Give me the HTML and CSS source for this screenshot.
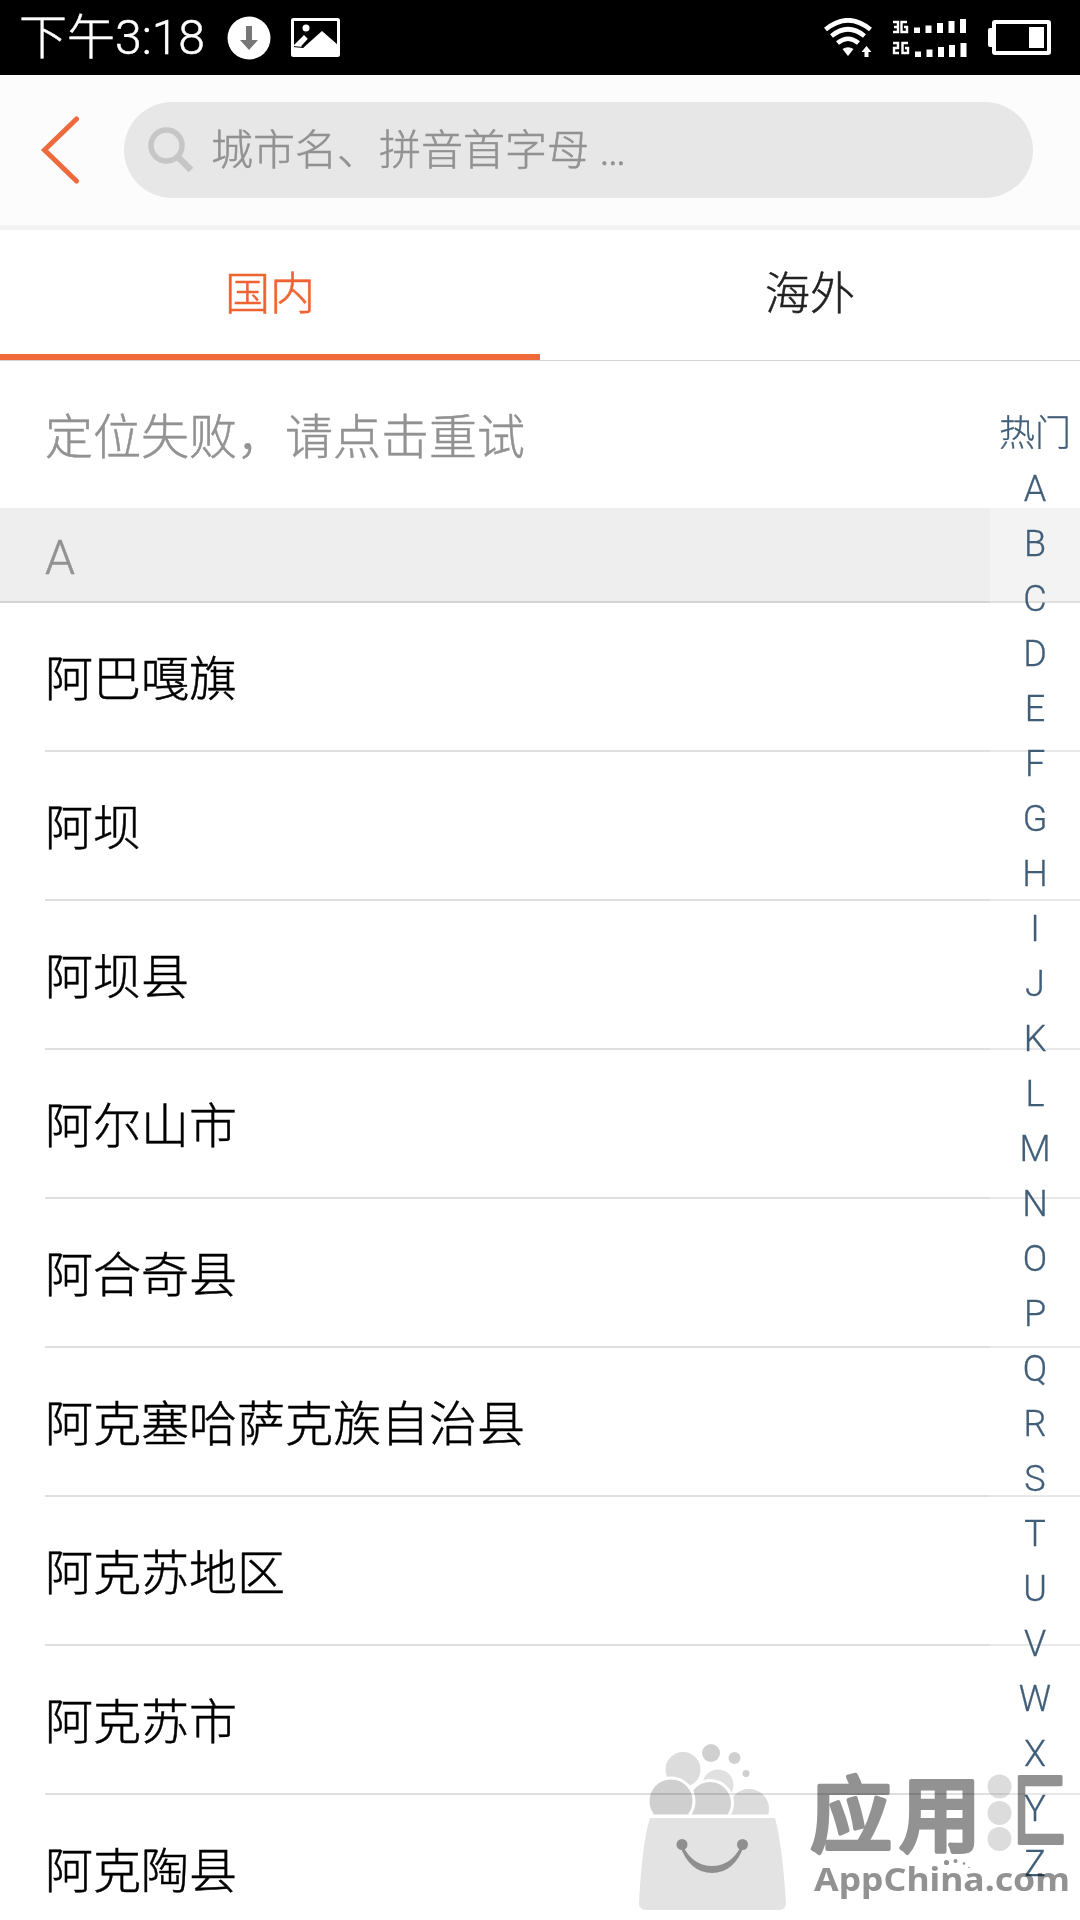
FILE: index.html
```html
<!DOCTYPE html>
<html lang="zh-CN">
<head>
  <meta charset="UTF-8" />
  <meta name="viewport" content="width=device-width, initial-scale=1.0" />
  <title>选择城市</title>
  <link rel="stylesheet" href="styles.css">
</head>
<body>
  <div class="status-bar">
    <span class="time">下午3:18</span>
    <svg class="download-icon" width="44" height="44" viewBox="0 0 44 44">
      <circle cx="22" cy="22" r="21.5" fill="#fff"/>
      <path d="M19 10h6v14h6L22 34l-9-10h6z" fill="#777"/>
    </svg>
    <svg class="photo-icon" width="49" height="39" viewBox="0 0 49 39">
      <rect x="1.5" y="1.5" width="46" height="36" rx="1" fill="none" stroke="#fff" stroke-width="3"/>
      <circle cx="15" cy="10" r="3.5" fill="#fff"/>
      <path d="M2 28l11-11 5 5-6 7zM12 30L31 13l16 14v10H2v-8z" fill="#fff"/>
      <path d="M11 29l9-10" stroke="#000" stroke-width="2.5"/>
    </svg>
    <div class="status-right">
      <svg width="48" height="39" viewBox="0 0 48 39">
        <g fill="none" stroke="#fff" stroke-width="4.6">
          <path d="M1.5 11.5Q24-7 46.5 11.5"/>
          <path d="M7.5 18Q24 4.5 40.5 18"/>
          <path d="M13.5 25Q24 16.5 34.5 25"/>
        </g>
        <path d="M18.500 31Q24 27.500 29.500 31L24 38z" fill="#fff"/>
        <path d="M42.500 28l5 6h-3v5h-4v-5h-3z" fill="#fff"/>
      </svg>
      <svg class="signal" width="76" height="40" viewBox="0 0 76 40">
        <g fill="none" stroke="#fff" stroke-width="2.4">
          <path d="M1 4h5v10H1M2 9h4M15 4H9.500v10H15V9h-3"/>
          <path d="M1 25h5v5H2v5h5M16 25h-5.500v10H16v-5h-3"/>
        </g>
        <path fill="#fff" d="M22 9.500h6V15h-6zM33.500 7.500h6V15h-6zM45 5h6v10h-6zM56.500 3h6v12h-6zM68 1h6v14h-6zM23 33.500h6V39h-6zM34.500 31.500h6V39h-6zM46 29h6v10h-6zM57 27h6v12h-6zM68.500 25h6v14h-6z"/>
      </svg>
      <svg width="64" height="36" viewBox="0 0 64 36">
        <rect x="6" y="2" width="55" height="31" rx="1" fill="none" stroke="#fff" stroke-width="4"/>
        <path d="M0 10q0-2 2-2h3v19H2q-2 0-2-2zM41 7h15v21H41z" fill="#fff"/>
      </svg>
    </div>
  </div>

  <div class="header">
    <svg class="back" width="40" height="68" viewBox="0 0 40 68">
      <path d="M36.500 3L4.500 34l32 31" fill="none" stroke="#ec6a3c" stroke-width="5" stroke-linecap="round"/>
    </svg>
    <div class="search">
      <svg width="46" height="46" viewBox="0 0 46 46">
        <circle cx="18.500" cy="18.500" r="15.500" fill="none" stroke="#c6c6c6" stroke-width="5.500"/>
        <path d="M29 29l14 14" stroke="#c6c6c6" stroke-width="6.500"/>
      </svg>
      <span>城市名、拼音首字母 …</span>
    </div>
  </div>

  <div class="tabs">
    <div class="tab active">国内</div>
    <div class="tab">海外</div>
  </div>

  <div class="location">定位失败，请点击重试</div>
  <div class="letter">A</div>
  <ul class="cities">
    <li>阿巴嘎旗</li>
    <li>阿坝</li>
    <li>阿坝县</li>
    <li>阿尔山市</li>
    <li>阿合奇县</li>
    <li>阿克塞哈萨克族自治县</li>
    <li>阿克苏地区</li>
    <li>阿克苏市</li>
    <li>阿克陶县</li>
  </ul>

  <div class="index-bar">
    <span>热门</span>
    <span>A</span><span>B</span><span>C</span><span>D</span><span>E</span><span>F</span>
    <span>G</span><span>H</span><span>I</span><span>J</span><span>K</span><span>L</span>
    <span>M</span><span>N</span><span>O</span><span>P</span><span>Q</span><span>R</span>
    <span>S</span><span>T</span><span>U</span><span>V</span><span>W</span><span>X</span>
    <span>Y</span><span>Z</span>
  </div>

  <svg class="watermark" width="460" height="200" viewBox="0 0 460 200">
    <clipPath id="bagTop"><rect x="0" y="0" width="200" height="94.500"/></clipPath>
    <!-- bubbles -->
    <g clip-path="url(#bagTop)" stroke="#fff" stroke-width="3">
      <circle cx="98" cy="65" r="17" fill="#e0e0e0"/>
      <circle cx="63" cy="49.500" r="19" fill="#dcdcdc"/>
      <circle cx="129" cy="89" r="21.500" fill="#dcdcdc"/>
      <circle cx="90" cy="83" r="22.500" fill="#d2d2d2"/>
      <circle cx="51" cy="81" r="23" fill="#cfcfcf"/>
    </g>
    <g fill="#d0d0d0">
      <circle cx="91" cy="33" r="9"/>
      <circle cx="114.500" cy="38" r="6"/>
      <circle cx="126" cy="53.500" r="3.500"/>
    </g>
    <!-- bag -->
    <path d="M30 98h125q7 25 11 85 0 7-7 7H26q-7 0-7-7 3-60 11-85z" fill="#e3e3e3"/>
    <g fill="#8f8f8f">
      <circle cx="62" cy="124.500" r="5.500"/>
      <circle cx="122.500" cy="124.500" r="5.500"/>
      <path d="M60 126q10 27 32 27t32-27l-3 0q-10 20-29 20t-29-20z"/>
    </g>
    <g class="brand">
      <text x="190" y="125" font-size="82" letter-spacing="7">应用</text>
      <text transform="translate(393 121) scale(.66 1)" font-size="82">匚</text>
      <text class="domain" x="194" y="171" font-size="32" textLength="256" lengthAdjust="spacingAndGlyphs">AppChina.com</text>
    </g>
    <g fill="#dcdcdc">
      <circle cx="379.500" cy="66.500" r="12"/>
      <circle cx="379.500" cy="93" r="12"/>
      <circle cx="379.500" cy="119" r="12"/>
    </g>
    <g fill="#929292">
      <circle cx="326.500" cy="142.500" r="2.600"/>
      <circle cx="335.500" cy="141" r="2"/>
      <circle cx="344" cy="143.500" r="1.300"/>
      <circle cx="349" cy="147.500" r=".8"/>
    </g>
  </svg>
</body>
</html>
```
FILE: styles.css
```css
* {
  box-sizing: border-box;
}

body {
  position: relative;
  width: 1080px;
  height: 1920px;
  margin: 0;
  overflow: hidden;
  background: #fff;
  font-family: Roboto, "Noto Sans CJK SC", sans-serif;
  font-weight: 300;
  color: #000;
  -webkit-text-stroke: 0.5px currentColor;
}

.status-bar {
  display: flex;
  align-items: center;
  height: 75px;
  padding: 0 28px 0 19px;
  background: #000;
  color: #fff;
}

.time {
  font-size: 48px;
  line-height: 74px;
}

.download-icon {
  margin-left: 22px;
}

.photo-icon {
  margin-left: 20px;
}

.status-right {
  display: flex;
  align-items: center;
  gap: 20px;
  margin-left: auto;
}

.header {
  display: flex;
  align-items: center;
  height: 155px;
  padding: 0 47px 1px 40px;
  background: #fcfcfc;
  border-bottom: 5px solid #f3f3f3;
}

.search {
  display: flex;
  flex: 1;
  align-items: center;
  height: 96px;
  margin-left: 44px;
  padding-left: 24px;
  border-radius: 48px;
  background: #e7e7e7;
  color: #929292;
  font-size: 42px;
}

.search span {
  margin-left: 17px;
  padding-bottom: 7px;
}

.tabs {
  display: flex;
  height: 131px;
  border-bottom: 1px solid #d4d4d4;
}

.tab {
  flex: 1;
  height: 130px;
  padding-top: 3px;
  border-bottom: 6px solid transparent;
  color: #222;
  font-size: 45px;
  line-height: 124px;
  text-align: center;
}

.tab.active {
  border-color: #ef693b;
  color: #ee6432;
}

.location {
  height: 147px;
  padding-left: 45px;
  color: #929292;
  font-size: 48px;
  line-height: 154px;
}

.letter {
  height: 95px;
  padding-left: 45px;
  border-bottom: 2px solid #d4d4d4;
  background: #eee;
  color: #929292;
  font-size: 48px;
  line-height: 100px;
}

.cities {
  margin: 0 0 0 45px;
  padding: 0;
  list-style: none;
}

.cities li {
  height: 149px;
  border-bottom: 2px solid #dfdfdf;
  font-size: 48px;
  line-height: 153px;
}

/* sits over the right edge of the list */
.index-bar {
  position: absolute;
  top: 361px;
  right: 0;
  bottom: 0;
  display: flex;
  flex-direction: column;
  width: 90px;
  padding-top: 46px;
  background: rgba(255, 255, 255, 0.3);
  color: #415e78;
  font-size: 36px;
  line-height: 55px;
  text-align: center;
  -webkit-text-stroke-width: 0.3px;
}

.index-bar span {
  flex: none;
  height: 55px;
}

.watermark {
  position: absolute;
  right: 0;
  bottom: 0;
  mix-blend-mode: multiply;
}

.brand {
  fill: #929292;
  stroke: #929292;
  stroke-width: 4;
  stroke-linejoin: round;
  font-weight: 500;
  -webkit-text-stroke: 0;
}

.domain {
  font-family: "Noto Sans", sans-serif;
  font-weight: 700;
  stroke-width: 0;
}
```
